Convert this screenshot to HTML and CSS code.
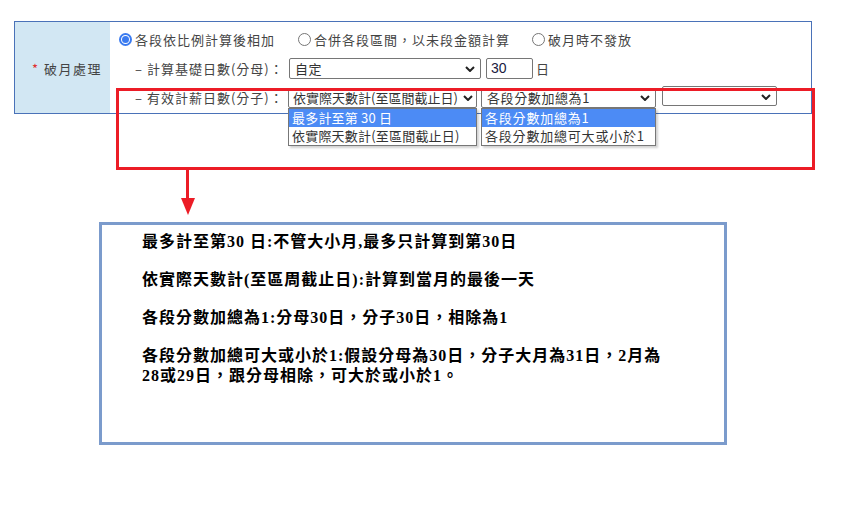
FILE: index.html
```html
<!DOCTYPE html>
<html lang="zh-Hant">
<head>
<meta charset="utf-8">
<title>破月處理</title>
<link rel="stylesheet" href="styles.css">
</head>
<body>
<div class="page">
  <div class="form">
    <div class="label"><span class="req">*</span>&nbsp;破月處理</div>
    <div class="fields">
      <div class="row">
        <span class="radio checked"></span><span class="opt opt1">各段依比例計算後相加</span>
        <span class="radio"></span><span class="opt opt2">合併各段區間，以未段金額計算</span>
        <span class="radio"></span><span class="opt">破月時不發放</span>
      </div>
      <div class="row sub">
        <span class="sublabel">– 計算基礎日數(分母)：</span>
        <div class="select s-base"><span>自定</span><svg class="chev" viewBox="0 0 10 6" width="10" height="6"><path d="M1 1 L5 5 L9 1" fill="none" stroke="#222" stroke-width="2"/></svg></div>
        <div class="input">30</div>
        <span class="unit">日</span>
      </div>
      <div class="row sub">
        <span class="sublabel">– 有效計薪日數(分子)：</span>
        <div class="select s-a"><span>依實際天數計(至區間截止日)</span><svg class="chev" viewBox="0 0 10 6" width="10" height="6"><path d="M1 1 L5 5 L9 1" fill="none" stroke="#222" stroke-width="2"/></svg></div>
        <div class="select s-b"><span>各段分數加總為1</span><svg class="chev" viewBox="0 0 10 6" width="10" height="6"><path d="M1 1 L5 5 L9 1" fill="none" stroke="#222" stroke-width="2"/></svg></div>
        <div class="select s-c"><span></span><svg class="chev" viewBox="0 0 10 6" width="10" height="6"><path d="M1 1 L5 5 L9 1" fill="none" stroke="#222" stroke-width="2"/></svg></div>
      </div>
    </div>
  </div>

  <ul class="list list-a">
    <li class="hl">最多計至第 30 日</li>
    <li>依實際天數計(至區間截止日)</li>
  </ul>
  <ul class="list list-b">
    <li class="hl">各段分數加總為1</li>
    <li>各段分數加總可大或小於1</li>
  </ul>

  <div class="redbox"></div>
  <div class="arrow-line"></div>
  <div class="arrow-head"></div>

  <div class="note">
    <p>最多計至第30 日:不管大小月,最多只計算到第30日</p>
    <p>依實際天數計(至區周截止日):計算到當月的最後一天</p>
    <p>各段分數加總為1:分母30日，分子30日，相除為1</p>
    <p>各段分數加總可大或小於1:假設分母為30日，分子大月為31日，2月為<br>28或29日，跟分母相除，可大於或小於1。</p>
  </div>
</div>
</body>
</html>
```

FILE: styles.css
```css
html, body {
  margin: 0;
  padding: 0;
  background: #ffffff;
}

.page {
  position: relative;
  width: 847px;
  height: 532px;
  overflow: hidden;
  font-family: "Noto Sans CJK TC", "Noto Sans", sans-serif;
  font-size: 13px;
  color: #444;
  letter-spacing: 1px;
}

.form {
  box-sizing: border-box;
  margin: 21px 0 0 14px;
  width: 798px;
  height: 93px;
  border: 1px solid #4a72b8;
  display: flex;
}

.label {
  box-sizing: border-box;
  width: 95px;
  background: #d2e7f3;
  display: flex;
  align-items: center;
  justify-content: flex-end;
  padding-right: 8px;
  padding-top: 2px;
  color: #444;
  letter-spacing: 1.5px;
}

.req {
  color: #e03030;
}

.fields {
  flex: 1;
  padding: 3px 0 0 9px;
}

.row {
  height: 29px;
  display: flex;
  align-items: center;
}

.radio {
  box-sizing: border-box;
  width: 13px;
  height: 13px;
  border: 1px solid #767676;
  border-radius: 50%;
  margin-right: 3px;
  position: relative;
}

.radio.checked {
  border: 2px solid #3b7bf0;
}

.radio.checked::after {
  content: "";
  position: absolute;
  left: 1px;
  top: 1px;
  width: 7px;
  height: 7px;
  border-radius: 50%;
  background: #3b7bf0;
}

.opt1 {
  margin-right: 23px;
}

.opt2 {
  margin-right: 22px;
}

.sub {
  padding-left: 16px;
}

.sublabel {
  width: 154px;
  flex: none;
}

.select {
  box-sizing: border-box;
  height: 21px;
  border: 1px solid #767676;
  border-radius: 2px;
  background: #fff;
  display: flex;
  align-items: center;
  justify-content: space-between;
  padding: 0 5px 0 5px;
  color: #333;
  letter-spacing: 0.6px;
}

.select span {
  white-space: nowrap;
}

.chev {
  flex: none;
  margin-top: 1px;
}

.s-base {
  width: 192px;
}

.input {
  box-sizing: border-box;
  width: 47px;
  height: 21px;
  border: 1px solid #767676;
  border-radius: 2px;
  margin-left: 5px;
  padding-left: 4px;
  line-height: 19px;
  color: #1a1a40;
  font-family: "Liberation Sans", "Noto Sans CJK TC", sans-serif;
  font-size: 14px;
  letter-spacing: 0;
}

.unit {
  margin-left: 3px;
}

.s-a {
  width: 189px;
  height: 20px;
  margin-left: -1px;
  padding: 0 3px 0 4px;
  letter-spacing: 0;
}

.s-b {
  width: 175px;
  height: 20px;
  margin-left: 4px;
}

.s-c {
  width: 115px;
  height: 20px;
  margin-left: 6px;
  margin-top: -3px;
}

.list {
  position: absolute;
  margin: 0;
  padding: 0;
  list-style: none;
  top: 108px;
  box-sizing: border-box;
  border: 1px solid #777;
  background: #fff;
  box-shadow: 2px 2px 2px rgba(0, 0, 0, 0.18);
  color: #333;
}

.list li {
  height: 18px;
  line-height: 18px;
  padding-left: 3px;
  white-space: nowrap;
}

.list li.hl {
  background: #4c8bf5;
  color: #fff;
}

.list-a {
  left: 288px;
  width: 189px;
  letter-spacing: 0.2px;
}

.list-b {
  left: 481px;
  width: 175px;
  letter-spacing: 0.8px;
}

.redbox {
  position: absolute;
  left: 116px;
  top: 88px;
  width: 693px;
  height: 76px;
  border: 3px solid #ec1c26;
}

.arrow-line {
  position: absolute;
  left: 186px;
  top: 170px;
  width: 3px;
  height: 30px;
  background: #ec1c26;
}

.arrow-head {
  position: absolute;
  left: 181px;
  top: 198px;
  width: 0;
  height: 0;
  border-left: 7px solid transparent;
  border-right: 7px solid transparent;
  border-top: 17px solid #ec1c26;
}

.note {
  position: absolute;
  left: 99px;
  top: 222px;
  width: 582px;
  height: 210px;
  border: 3px solid #7b9bcc;
  padding: 7px 0 0 40px;
  box-sizing: content-box;
  font-family: "Liberation Serif", "Noto Sans CJK TC", serif;
  font-weight: bold;
  font-size: 16px;
  line-height: 20px;
  color: #000;
  letter-spacing: 1px;
}

.note p {
  margin: 0 0 18px 0;
  white-space: nowrap;
}
```
